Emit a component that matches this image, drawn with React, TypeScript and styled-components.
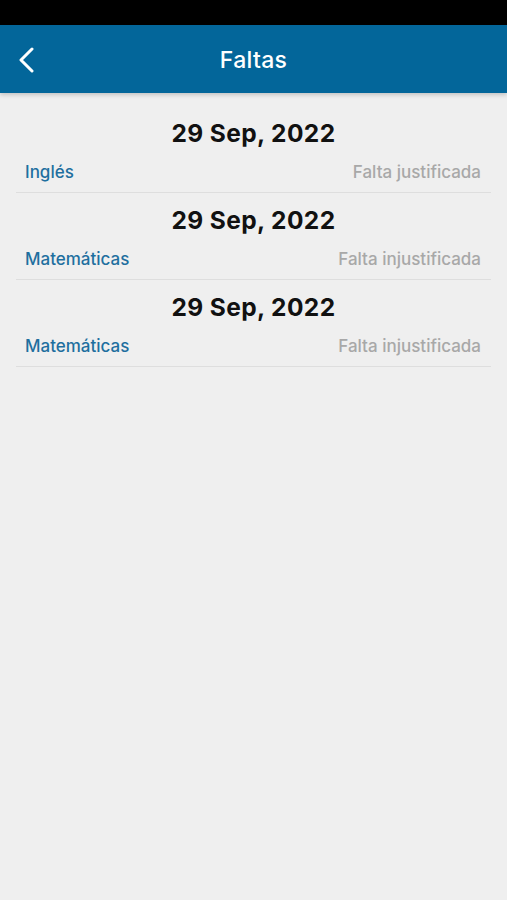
import styled, { createGlobalStyle } from "styled-components";

const GlobalStyle = createGlobalStyle`
  html, body {
    margin: 0;
    padding: 0;
    background: #efefef;
    font-family: Inter, "Open Sans", Roboto, sans-serif;
  }
`;

type Absence = {
  date: string;
  subject: string;
  status: string;
};

const absences: Absence[] = [
  { date: "29 Sep, 2022", subject: "Inglés", status: "Falta justificada" },
  { date: "29 Sep, 2022", subject: "Matemáticas", status: "Falta injustificada" },
  { date: "29 Sep, 2022", subject: "Matemáticas", status: "Falta injustificada" },
];

export default function App() {
  return (
    <Screen>
      <GlobalStyle />
      <StatusBar />
      <Header>
        <BackButton aria-label="Volver">
          <svg width="16" height="26" viewBox="0 0 16 26" fill="none">
            <path
              d="M14 2 L3 13 L14 24"
              stroke="#ffffff"
              strokeWidth="3"
              strokeLinecap="round"
              strokeLinejoin="round"
            />
          </svg>
        </BackButton>
        <Title>Faltas</Title>
      </Header>
      <List>
        {absences.map((a, i) => (
          <Group key={i}>
            <DateLabel>{a.date}</DateLabel>
            <Row>
              <Subject>{a.subject}</Subject>
              <Status>{a.status}</Status>
            </Row>
          </Group>
        ))}
      </List>
    </Screen>
  );
}

const Screen = styled.div`
  display: flex;
  flex-direction: column;
  width: 100%;
  min-height: 900px;
  background: #efefef;
`;

const StatusBar = styled.div`
  height: 25px;
  background: #000000;
`;

const Header = styled.header`
  position: relative;
  display: flex;
  align-items: center;
  justify-content: center;
  height: 68px;
  padding-top: 2px;
  box-sizing: border-box;
  background: #03669a;
  box-shadow: 0 2px 4px rgba(0, 0, 0, 0.18);
`;

const BackButton = styled.button`
  position: absolute;
  left: 18px;
  top: 22px;
  display: flex;
  padding: 0;
  border: none;
  background: none;
  cursor: pointer;
`;

const Title = styled.h1`
  margin: 0;
  color: #ffffff;
  font-size: 23px;
  font-weight: 500;
  letter-spacing: 0.3px;
`;

const List = styled.div`
  display: flex;
  flex-direction: column;
  padding-top: 13px;
`;

const Group = styled.section`
  display: flex;
  flex-direction: column;
  padding-top: 12px;
  margin: 0 16px;
  border-bottom: 1px solid #dedede;
`;

const DateLabel = styled.div`
  text-align: center;
  font-size: 24.5px;
  line-height: 30px;
  font-weight: 700;
  color: #111111;
  letter-spacing: 0.4px;
`;

const Row = styled.div`
  display: flex;
  justify-content: space-between;
  align-items: center;
  margin-top: 14px;
  padding: 0 10px 10px 9px;
  font-size: 17px;
  line-height: 20px;
`;

const Subject = styled.span`
  color: #1f6f9f;
  font-weight: 500;
`;

const Status = styled.span`
  color: #a8a8a8;
  font-weight: 500;
`;
